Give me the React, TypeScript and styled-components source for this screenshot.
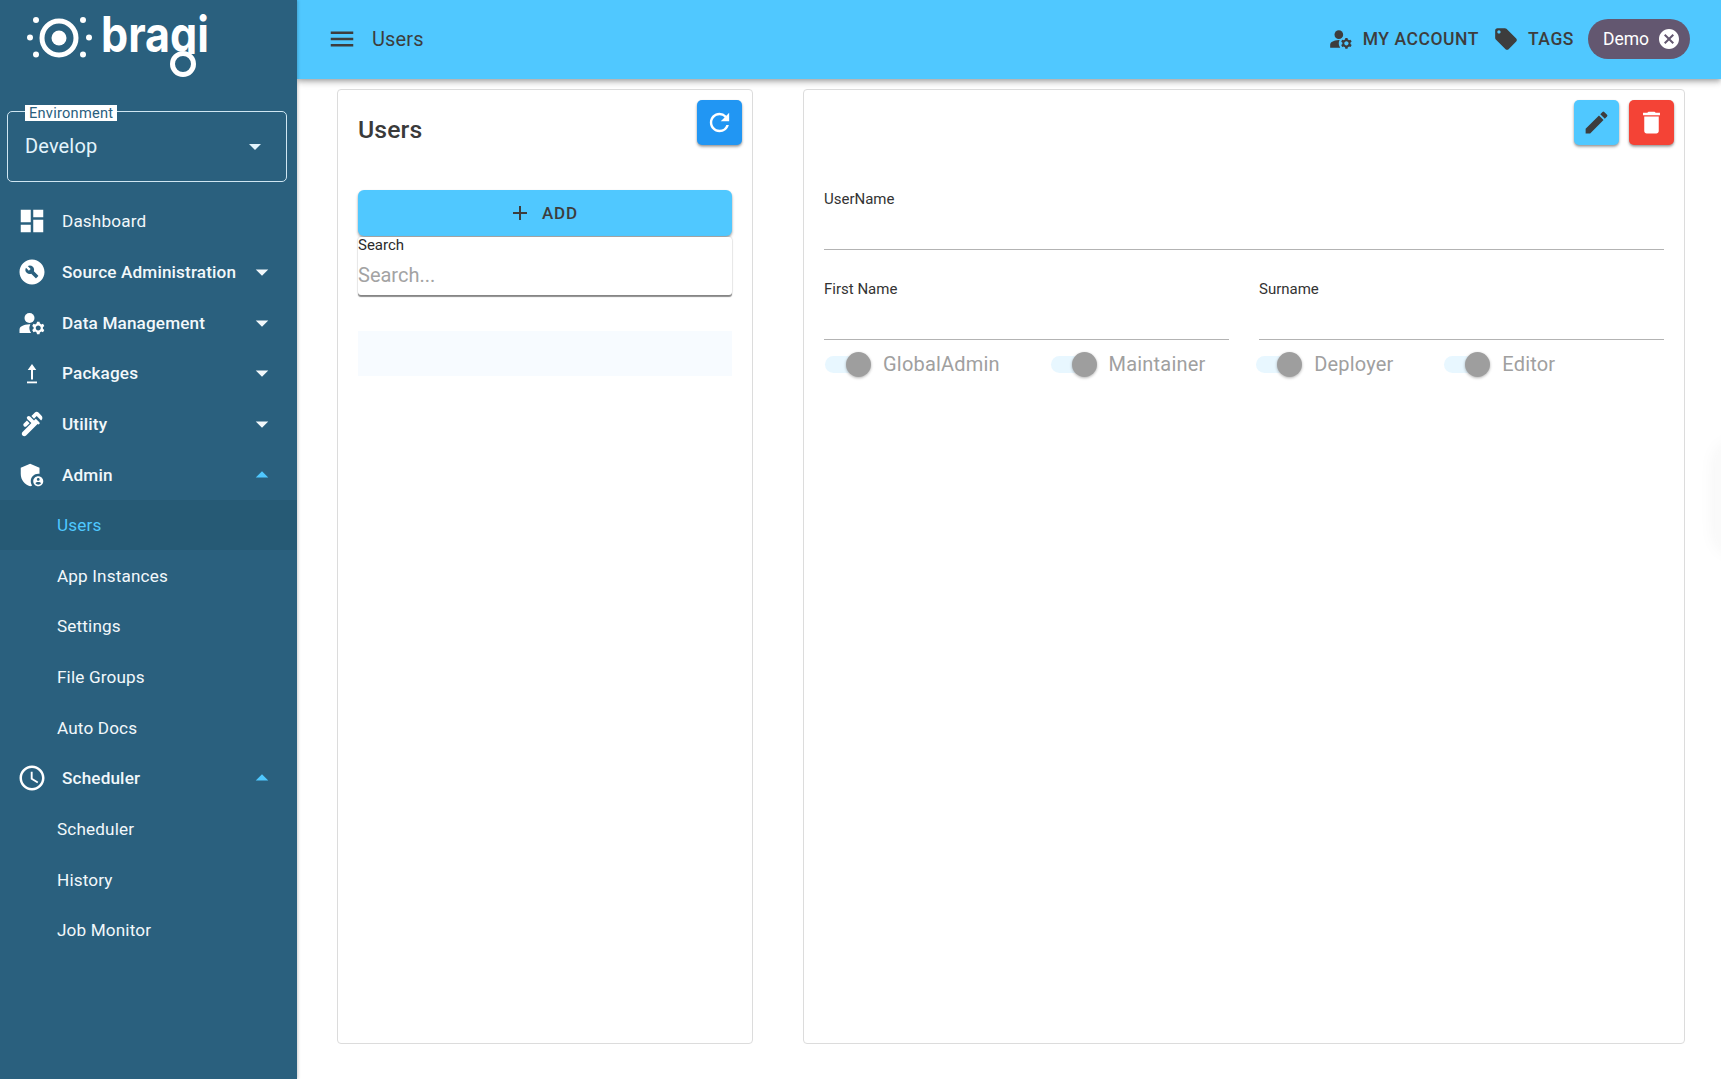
import React from "react";
import styled, { createGlobalStyle } from "styled-components";
import {
  MdDashboard, MdBuildCircle, MdManageAccounts, MdPlumbing, MdAdminPanelSettings,
  MdOutlineAccessTime, MdArrowDropDown, MdArrowDropUp, MdMenu, MdLocalOffer, MdCancel,
  MdRefresh, MdAdd, MdEdit, MdDelete,
} from "react-icons/md";

const Global = createGlobalStyle`
  html, body { margin: 0; padding: 0; height: 100%; background: #fff; overflow: hidden; }
  body { font-family: Roboto, "Liberation Sans", sans-serif; }
  * { box-sizing: border-box; }
`;

const Page = styled.div`display: flex; width: 1721px; height: 1079px; overflow: hidden; position: relative;`;

const Sidebar = styled.aside`
  width: 297px; flex: none; background: #2a607e; color: #fff; position: relative; z-index: 2;
  box-shadow: 1px 0 3px rgba(0,0,0,.2);
`;
const LogoWrap = styled.div`height: 111px;`;
const SelectBox = styled.div`
  position: relative; margin-left: 7px; width: 280px; height: 71px;
  border: 1px solid #cfe6f2; border-radius: 5px;
  display: flex; align-items: center; justify-content: space-between;
  padding: 0 25px 2px 17px; color: #e3f4fc; font-size: 20px; letter-spacing: .15px;
`;
const SelectLabel = styled.span`
  position: absolute; left: 17px; top: -7px; height: 16px; padding: 0 4px;
  background: #fff; color: #2a607e; font-size: 14.6px; line-height: 16px; letter-spacing: .25px;
`;
const SelectArrow = styled.span`
  width: 0; height: 0; border-left: 6px solid transparent; border-right: 6px solid transparent;
  border-top: 6px solid #e3f4fc; margin-top: 3px;
`;
const Nav = styled.nav`margin-top: 14px; display: flex; flex-direction: column;`;
const Row = styled.div<{ $active?: boolean; $sub?: boolean }>`
  height: 50.65px; display: flex; align-items: center; position: relative;
  padding-left: ${p => (p.$sub ? "57px" : "17px")};
  background: ${p => (p.$active ? "#265a75" : "transparent")};
  color: ${p => (p.$active ? "#4fc8ff" : "#f2f8fb")};
  font-size: 17.15px;
  font-weight: ${p => (p.$active ? 500 : 400)};
  letter-spacing: .15px;
`;
const IconSlot = styled.span`
  width: 30px; height: 30px; display: flex; align-items: center; justify-content: center;
  margin-right: 15px; flex: none; color: #fff; font-size: 30px;
`;
const RowLabel = styled.span<{ $strong?: boolean }>`
  flex: 1; font-weight: ${p => (p.$strong ? 500 : 400)};
`;
const Caret = styled.span<{ $open?: boolean }>`
  width: 30px; height: 30px; margin-right: 20px; display: flex; align-items: center; justify-content: center;
  font-size: 30px; color: ${p => (p.$open ? "#4fc8ff" : "#f2f8fb")};
`;

const Content = styled.div`flex: 1; display: flex; flex-direction: column; min-width: 0; position: relative;`;
const AppBar = styled.header`
  height: 79px; flex: none; background: #50c8ff; color: #3d3d3d; display: flex; align-items: center;
  padding: 0 31px 1px 30px; position: relative; z-index: 1;
  box-shadow: 0 2px 4px -1px rgba(0,0,0,.2), 0 4px 5px rgba(0,0,0,.14), 0 1px 10px rgba(0,0,0,.12);
`;
const MenuIcon = styled.span`font-size: 30px; display: flex; margin-right: 15px; color: #3d3d3d;`;
const BarTitle = styled.span`flex: 1; font-size: 20px; letter-spacing: .15px;`;
const BarAction = styled.span`
  display: flex; align-items: center; font-size: 17.5px; font-weight: 500; letter-spacing: .55px; margin-right: 14px;
`;
const BarIcon = styled.span`display: flex; font-size: 26px; margin-right: 9px;`;
const Chip = styled.span`
  height: 40px; width: 102px; border-radius: 20px; background: #635770; color: #fff; font-size: 17.5px;
  display: flex; align-items: center; justify-content: space-between; padding: 0 9px 0 15px;
`;
const ChipClose = styled.span`display: flex; font-size: 24px; color: #fff;`;

const Main = styled.main`
  flex: 1; display: flex; gap: 50px; padding: 10px 36px 35px 40px; min-height: 0;
`;
const Card = styled.section<{ $w?: number }>`
  border: 1px solid #dcdcdc; border-radius: 4px; background: #fff;
  ${p => (p.$w ? `width: ${p.$w}px; flex: none;` : "flex: 1;")}
`;
const CardHeader = styled.div`
  display: flex; justify-content: space-between; align-items: flex-start; padding: 10px 10px 0 20px;
`;
const CardTitle = styled.h1`
  margin: 14px 0 0; font-size: 24.8px; line-height: 31px; font-weight: 500; color: #3a3a3a; letter-spacing: .1px;
`;
const Actions = styled.div`display: flex; gap: 10px; justify-content: flex-end; padding: 10px 10px 0 0;`;
const Square = styled.button<{ $bg: string; $fg: string }>`
  width: 45px; height: 45px; border: 0; border-radius: 5px; padding: 0; background: ${p => p.$bg}; color: ${p => p.$fg};
  display: flex; align-items: center; justify-content: center; font-size: 29px;
  box-shadow: 0 2px 3px rgba(0,0,0,.3), 0 1px 2px rgba(0,0,0,.15);
`;
const ListBody = styled.div`padding: 45px 20px 0;`;
const AddButton = styled.button`
  width: 100%; height: 46px; border: 0; border-radius: 6px; background: #50c8ff; color: #3d3d3d;
  display: flex; align-items: center; justify-content: center; gap: 10px; padding: 0 4px 1px 0;
  font-family: inherit; font-size: 17px; font-weight: 500; letter-spacing: .85px;
  box-shadow: 0 2px 3px rgba(0,0,0,.3), 0 1px 2px rgba(0,0,0,.12);
`;
const AddIcon = styled.span`display: flex; font-size: 24px;`;
const SearchBox = styled.div`
  margin-top: 1px; height: 58px; border-radius: 3px; background: #fff;
  box-shadow: 0 1.5px 1px rgba(0,0,0,.45), 0 0 2px rgba(0,0,0,.18);
`;
const SearchLabel = styled.label`display: block; font-size: 15px; line-height: 16px; color: #2b2b2b;`;
const SearchInput = styled.input`
  display: block; width: 100%; border: 0; outline: 0; padding: 0; margin-top: 7px; height: 30px;
  font-family: inherit; font-size: 20px; background: transparent;
  &::placeholder { color: #a3a3a3; opacity: 1; }
`;
const EmptyRow = styled.div`margin-top: 36px; height: 45px; background: #f7fbff;`;

const Form = styled.div`padding: 45px 20px 0;`;
const Field = styled.div`height: 90px; display: flex; flex-direction: column;`;
const FieldLabel = styled.label`font-size: 15px; line-height: 18px; color: #333;`;
const FieldInput = styled.input`
  margin-top: 14px; height: 28px; width: 100%; border: 0; border-bottom: 1px solid #b3b3b3; outline: 0; background: transparent; padding: 0;
`;
const TwoCols = styled.div`display: grid; grid-template-columns: 1fr 1fr; gap: 30px;`;
const Toggles = styled.div`display: flex; gap: 50.7px; margin-top: -21px; padding-left: 1px;`;
const Toggle = styled.div`display: flex; align-items: center; height: 30px;`;
const Track = styled.span`
  width: 37px; height: 17px; border-radius: 9px; background: #e8f7ff;
  display: flex; align-items: center; justify-content: flex-end; margin-right: 21px;
`;
const Thumb = styled.span`
  width: 25px; height: 25px; border-radius: 50%; background: #9e9e9e; flex: none; margin-right: -9px;
  box-shadow: 0 1px 3px rgba(0,0,0,.3);
`;
const ToggleLabel = styled.span`font-size: 20px; color: #a0a0a0; letter-spacing: .2px;`;
const EdgeGlow = styled.div`
  position: absolute; right: -34px; top: 443px; width: 40px; height: 110px; border-radius: 30px;
  box-shadow: 0 0 18px rgba(0,0,0,.05); background: rgba(0,0,0,.02); pointer-events: none;
`;

const Logo = () => (
  <svg width="230" height="84" viewBox="0 0 230 84" style={{ display: "block" }} aria-label="bragi">
    <g fill="#fff">
      <circle cx="36" cy="20" r="3" /><circle cx="83" cy="20" r="3" />
      <circle cx="30" cy="37.5" r="3" /><circle cx="89" cy="37.5" r="3" />
      <circle cx="36" cy="54.5" r="3" /><circle cx="83" cy="54.5" r="3" />
      <circle cx="59" cy="38" r="7.5" />
    </g>
    <circle cx="59" cy="38" r="17" fill="none" stroke="#fff" strokeWidth="5" />
    <text x="101" y="52" textLength="108" lengthAdjust="spacingAndGlyphs" fontFamily="Inter, Roboto, sans-serif" fontWeight="700" fontSize="50" fill="#fff">bragi</text>
    <rect x="168" y="54" width="30" height="24" fill="#2a607e" />
    <circle cx="183" cy="64" r="10.5" fill="#2a607e" stroke="#fff" strokeWidth="5" />
  </svg>
);

const PackagesIcon = () => (
  <svg width="30" height="30" viewBox="0 0 30 30" fill="#fff">
    <path d="M15 6 L19.3 12 H16 V21.5 H14 V12 H10.7 Z" />
    <rect x="10" y="23.5" width="10" height="1.8" />
  </svg>
);

type NavRow = { label: string; icon?: React.ReactNode; caret?: "up" | "down"; strong?: boolean; active?: boolean };
const rows: NavRow[] = [
  { label: "Dashboard", icon: <MdDashboard /> },
  { label: "Source Administration", icon: <MdBuildCircle />, caret: "down", strong: true },
  { label: "Data Management", icon: <MdManageAccounts />, caret: "down", strong: true },
  { label: "Packages", icon: <PackagesIcon />, caret: "down", strong: true },
  { label: "Utility", icon: <MdPlumbing />, caret: "down", strong: true },
  { label: "Admin", icon: <MdAdminPanelSettings />, caret: "up", strong: true },
  { label: "Users", active: true },
  { label: "App Instances" },
  { label: "Settings" },
  { label: "File Groups" },
  { label: "Auto Docs" },
  { label: "Scheduler", icon: <MdOutlineAccessTime />, caret: "up", strong: true },
  { label: "Scheduler" },
  { label: "History" },
  { label: "Job Monitor" },
];

export default function App() {
  return (
    <Page>
      <Global />
      <Sidebar>
        <LogoWrap><Logo /></LogoWrap>
        <SelectBox>
          <SelectLabel>Environment</SelectLabel>
          Develop
          <SelectArrow />
        </SelectBox>
        <Nav>
          {rows.map((r, i) => (
            <Row key={i} $active={r.active} $sub={!r.icon}>
              {r.icon && <IconSlot>{r.icon}</IconSlot>}
              <RowLabel $strong={r.strong}>{r.label}</RowLabel>
              {r.caret && (
                <Caret $open={r.caret === "up"}>
                  {r.caret === "up" ? <MdArrowDropUp /> : <MdArrowDropDown />}
                </Caret>
              )}
            </Row>
          ))}
        </Nav>
      </Sidebar>
      <Content>
        <AppBar>
          <MenuIcon><MdMenu /></MenuIcon>
          <BarTitle>Users</BarTitle>
          <BarAction><BarIcon><MdManageAccounts /></BarIcon>MY ACCOUNT</BarAction>
          <BarAction><BarIcon><MdLocalOffer /></BarIcon>TAGS</BarAction>
          <Chip>Demo<ChipClose><MdCancel /></ChipClose></Chip>
        </AppBar>
        <Main>
          <Card $w={416}>
            <CardHeader>
              <CardTitle>Users</CardTitle>
              <Square $bg="#2196f3" $fg="#fff"><MdRefresh /></Square>
            </CardHeader>
            <ListBody>
              <AddButton><AddIcon><MdAdd /></AddIcon>ADD</AddButton>
              <SearchBox>
                <SearchLabel>Search</SearchLabel>
                <SearchInput placeholder="Search..." />
              </SearchBox>
              <EmptyRow />
            </ListBody>
          </Card>
          <Card>
            <Actions>
              <Square $bg="#50c8ff" $fg="#3d3d3d"><MdEdit /></Square>
              <Square $bg="#f44336" $fg="#fff"><MdDelete /></Square>
            </Actions>
            <Form>
              <Field>
                <FieldLabel>UserName</FieldLabel>
                <FieldInput />
              </Field>
              <TwoCols>
                <Field>
                  <FieldLabel>First Name</FieldLabel>
                  <FieldInput />
                </Field>
                <Field>
                  <FieldLabel>Surname</FieldLabel>
                  <FieldInput />
                </Field>
              </TwoCols>
              <Toggles>
                {["GlobalAdmin", "Maintainer", "Deployer", "Editor"].map(t => (
                  <Toggle key={t}>
                    <Track><Thumb /></Track>
                    <ToggleLabel>{t}</ToggleLabel>
                  </Toggle>
                ))}
              </Toggles>
            </Form>
          </Card>
        </Main>
        <EdgeGlow />
      </Content>
    </Page>
  );
}
